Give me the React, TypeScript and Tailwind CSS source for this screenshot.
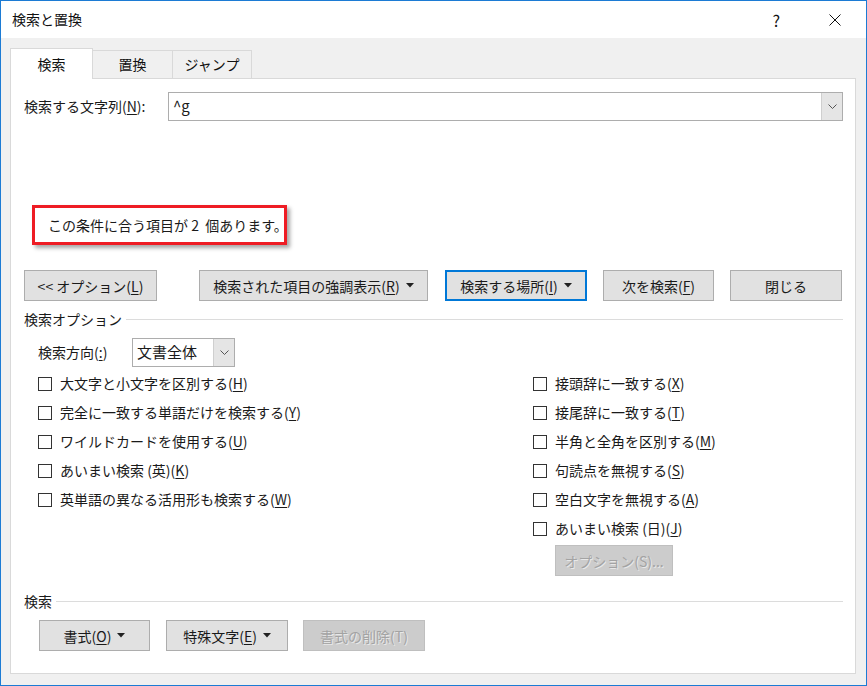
import React from 'react';

const font = { fontFamily: '"Noto Sans CJK JP", "Noto Sans", sans-serif' };

function U({ k }: { k: string }) {
  return <span className="underline underline-offset-2">{k}</span>;
}

function Caret() {
  return (
    <svg width="8" height="5" viewBox="0 0 8 5" className="ml-[6px] inline-block">
      <path d="M0 0h8L4 4.5z" fill="#222" />
    </svg>
  );
}

function Chevron() {
  return (
    <svg width="9" height="5" viewBox="0 0 9 5">
      <path d="M0.5 0.5L4.5 4.5L8.5 0.5" fill="none" stroke="#555" strokeWidth="1" />
    </svg>
  );
}

function Btn({
  children,
  w,
  focused,
  disabled,
}: {
  children: React.ReactNode;
  w: string;
  focused?: boolean;
  disabled?: boolean;
}) {
  const cls = disabled
    ? 'bg-[#cccccc] border border-[#bfbfbf] text-[#a3a3a3]'
    : focused
    ? 'bg-[#e1e1e1] border-2 border-[#0078d7] text-[#1a1a1a]'
    : 'bg-[#e1e1e1] border border-[#adadad] text-[#1a1a1a]';
  return (
    <div
      className={`${w} h-[31px] flex items-center justify-center whitespace-nowrap text-[14px] leading-none ${cls}`}
      style={disabled ? { textShadow: '1px 1px 0 #e8e8e8' } : undefined}
    >
      {children}
    </div>
  );
}

function Check({ label }: { label: React.ReactNode }) {
  return (
    <div className="h-[29px] flex items-center text-[14px] text-[#1a1a1a] whitespace-nowrap">
      <div className="w-[14px] h-[14px] border border-[#333] bg-white mr-[8px]" />
      <span>{label}</span>
    </div>
  );
}

function Legend({ text }: { text: string }) {
  return (
    <div className="flex items-center h-[18px] text-[14px] text-[#1a1a1a]">
      <span>{text}</span>
      <div className="flex-1 h-px bg-[#dcdcdc] ml-[4px]" />
    </div>
  );
}

export default function App() {
  return (
    <div
      className="w-[867px] h-[686px] border border-[#1c7bd4] bg-[#f0f0f0] flex flex-col overflow-hidden"
      style={font}
    >
      {/* title bar */}
      <div className="h-[37px] bg-white flex items-center pl-[11px] text-[14px] text-[#111]">
        <span>検索と置換</span>
        <div className="flex-1" />
        <span className="text-[16px] mr-[49px]">?</span>
        <svg width="12" height="12" viewBox="0 0 12 12" className="mr-[25px]">
          <path d="M0.5 0.5L11.5 11.5M11.5 0.5L0.5 11.5" stroke="#111" strokeWidth="1" />
        </svg>
      </div>

      <div className="flex-1 px-[9px] pt-[10px] flex flex-col">
        {/* tabs */}
        <div className="flex items-end h-[30px] text-[14px] text-[#111]">
          <div className="w-[83px] h-[31px] bg-white border border-b-0 border-[#d9d9d9] flex items-center justify-center relative z-10 -mb-px">
            検索
          </div>
          <div className="w-[80px] h-[28px] border-t border-r border-[#d9d9d9] flex items-center justify-center">
            置換
          </div>
          <div className="w-[79px] h-[28px] border-t border-r border-[#d9d9d9] flex items-center justify-center">
            ジャンプ
          </div>
        </div>

        {/* panel */}
        <div className="w-[846px] h-[596px] bg-white border border-[#d9d9d9] pl-[13px] pr-[12px] flex flex-col text-[#1a1a1a]">
          <div className="flex items-center mt-[13px]">
            <div className="w-[144px] text-[14px] whitespace-nowrap">
              検索する文字列(<U k="N" />):
            </div>
            <div className="flex-1 h-[29px] border border-[#adadad] flex items-center">
              <span className="pl-[4px] text-[15px] flex-1">^g</span>
              <div className="w-[21px] h-full bg-[#e5e5e5] border-l border-[#cfcfcf] flex items-center justify-center">
                <Chevron />
              </div>
            </div>
          </div>

          <div className="mt-[84px] ml-[8px] w-[255px] h-[40px] border-[3px] border-[#ee1c24] shadow-[3px_3px_4px_rgba(0,0,0,0.35)] flex items-center pl-[13px] text-[14px] whitespace-nowrap">
            この条件に合う項目が&nbsp;2&nbsp;&nbsp;個あります。
          </div>

          <div className="flex mt-[25px]">
            <Btn w="w-[133px]">
              &lt;&lt; オプション(<U k="L" />)
            </Btn>
            <div className="ml-[42px]">
              <Btn w="w-[229px]">
                検索された項目の強調表示(<U k="R" />)
                <Caret />
              </Btn>
            </div>
            <div className="ml-[17px]">
              <Btn w="w-[142px]" focused>
                検索する場所(<U k="I" />)
                <Caret />
              </Btn>
            </div>
            <div className="ml-[16px]">
              <Btn w="w-[111px]">
                次を検索(<U k="F" />)
              </Btn>
            </div>
            <div className="ml-[16px]">
              <Btn w="w-[112px]">閉じる</Btn>
            </div>
          </div>

          <div className="mt-[9px]">
            <Legend text="検索オプション" />
          </div>

          <div className="flex items-center mt-[10px] ml-[14px] text-[14px]">
            <span className="w-[94px]">
              検索方向(<U k=":" />)
            </span>
            <div className="w-[103px] h-[29px] border border-[#adadad] flex items-center">
              <span className="flex-1 pl-[4px] text-[15px]">文書全体</span>
              <div className="w-[21px] h-full bg-[#e5e5e5] border-l border-[#cfcfcf] flex items-center justify-center">
                <Chevron />
              </div>
            </div>
          </div>

          <div className="flex mt-[2px] ml-[14px]">
            <div className="w-[495px] flex flex-col">
              <Check label={<>大文字と小文字を区別する(<U k="H" />)</>} />
              <Check label={<>完全に一致する単語だけを検索する(<U k="Y" />)</>} />
              <Check label={<>ワイルドカードを使用する(<U k="U" />)</>} />
              <Check label={<>あいまい検索 (英)(<U k="K" />)</>} />
              <Check label={<>英単語の異なる活用形も検索する(<U k="W" />)</>} />
            </div>
            <div className="flex flex-col">
              <Check label={<>接頭辞に一致する(<U k="X" />)</>} />
              <Check label={<>接尾辞に一致する(<U k="T" />)</>} />
              <Check label={<>半角と全角を区別する(<U k="M" />)</>} />
              <Check label={<>句読点を無視する(<U k="S" />)</>} />
              <Check label={<>空白文字を無視する(<U k="A" />)</>} />
              <Check label={<>あいまい検索 (日)(<U k="J" />)</>} />
              <div className="ml-[22px] mt-[2px]">
                <Btn w="w-[118px]" disabled>
                  オプション(S)...
                </Btn>
              </div>
            </div>
          </div>

          <div className="mt-[16px]">
            <Legend text="検索" />
          </div>

          <div className="flex mt-[10px] ml-[15px]">
            <Btn w="w-[111px]">
              書式(<U k="O" />)
              <Caret />
            </Btn>
            <div className="ml-[16px]">
              <Btn w="w-[122px]">
                特殊文字(<U k="E" />)
                <Caret />
              </Btn>
            </div>
            <div className="ml-[15px]">
              <Btn w="w-[122px]" disabled>
                書式の削除(T)
              </Btn>
            </div>
          </div>
        </div>
      </div>
    </div>
  );
}
